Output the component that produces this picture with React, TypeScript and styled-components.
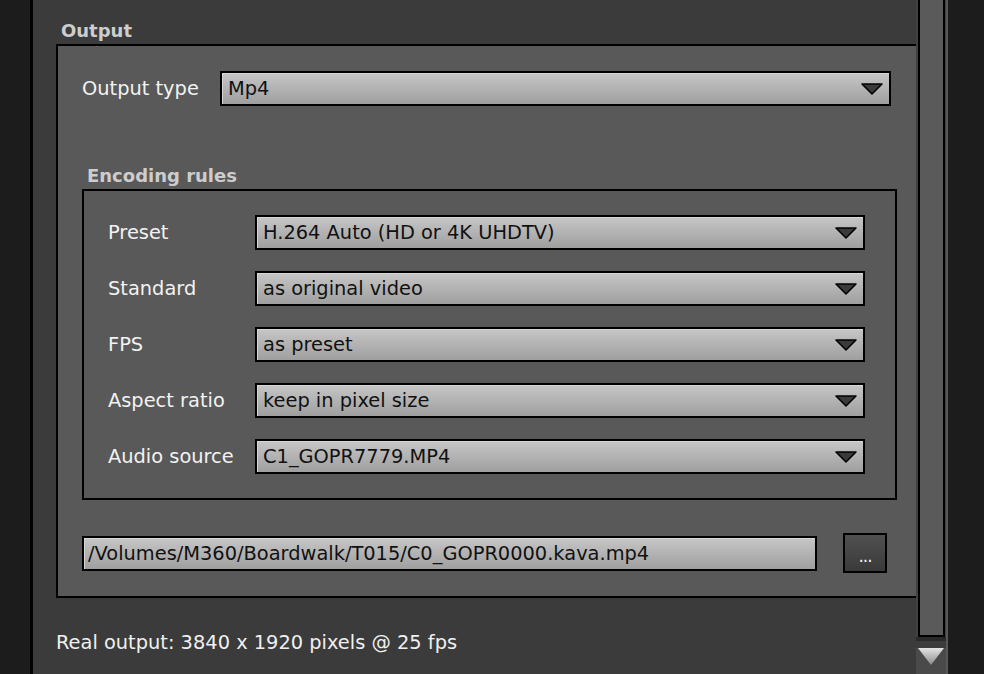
import styled, { createGlobalStyle } from "styled-components";

const GlobalStyle = createGlobalStyle`
  html, body {
    margin: 0;
    padding: 0;
    background: #1c1c1c;
    overflow: hidden;
  }
  body {
    font-family: "DejaVu Sans", "Liberation Sans", sans-serif;
  }
`;

const Window = styled.div`
  display: flex;
  height: 674px;
  width: 984px;
  background: #1c1c1c;
`;

const Gutter = styled.div<{ w: number }>`
  width: ${(p) => p.w}px;
  flex-shrink: 0;
  background: #1c1c1c;
`;

const Panel = styled.div`
  width: 886px;
  flex-shrink: 0;
  background: #3b3b3b;
  border-left: 3px solid #000;
  overflow: hidden;
  padding: 20px 0 0 23px;
  box-sizing: border-box;
`;

const GroupTitle = styled.div<{ indent?: number }>`
  font-weight: bold;
  font-size: 18px;
  line-height: 22px;
  color: #cdcdcd;
  padding-left: ${(p) => p.indent ?? 5}px;
  margin-bottom: 2px;
  white-space: nowrap;
`;

const GroupBox = styled.div<{ pad: string; width?: number }>`
  background: #595959;
  border: 2px solid #000;
  padding: ${(p) => p.pad};
  ${(p) => (p.width ? `width: ${p.width}px;` : "")}
  box-sizing: border-box;
  display: flex;
  flex-direction: column;
`;

const Row = styled.div<{ labelWidth: number }>`
  display: grid;
  grid-template-columns: ${(p) => p.labelWidth}px 1fr;
  align-items: center;
`;

const RowList = styled.div`
  display: flex;
  flex-direction: column;
  gap: 21px;
`;

const Label = styled.div`
  color: #f2f2f2;
  font-size: 19.4px;
  white-space: nowrap;
`;

const Field = styled.div<{ padLeft?: number }>`
  height: 35px;
  box-sizing: border-box;
  border: 2px solid #000;
  background: linear-gradient(#c6c6c6, #9f9f9f);
  box-shadow: inset 1px 1px 0 #d6d6d6;
  display: flex;
  align-items: center;
  padding: 0 6px 0 ${(p) => p.padLeft ?? 6}px;
  color: #111;
  font-size: 19.4px;
  white-space: nowrap;
  overflow: hidden;
`;

const SelectBox = styled(Field)<{ mr?: number }>`
  justify-content: space-between;
  margin-right: ${(p) => p.mr ?? 0}px;
`;

const Arrow = () => (
  <svg width="22" height="12" viewBox="0 0 22 12">
    <polygon points="1,1 21,1 11,11" fill="#3a3a3a" stroke="#000" strokeWidth="1.5" strokeLinejoin="round" />
  </svg>
);

const Select = ({ value, mr }: { value: string; mr?: number }) => (
  <SelectBox mr={mr}>
    <span>{value}</span>
    <Arrow />
  </SelectBox>
);

const Spacer = styled.div<{ h: number }>`
  height: ${(p) => p.h}px;
  flex-shrink: 0;
`;

const PathRow = styled.div`
  display: flex;
  align-items: center;
  gap: 26px;
  margin-right: 10px;
  height: 40px;
`;

const PathField = styled(Field)`
  flex: 1;
`;

const BrowseButton = styled.button`
  width: 44px;
  height: 40px;
  box-sizing: border-box;
  border: 2px solid #000;
  background: linear-gradient(#505050, #3a3a3a);
  color: #f2f2f2;
  font-family: "DejaVu Sans", sans-serif;
  font-size: 17px;
  padding: 6px 0 0;
  letter-spacing: -1px;
`;

const Status = styled.div`
  margin-top: 34px;
  color: #f0f0f0;
  font-size: 19.4px;
  line-height: 22px;
  white-space: nowrap;
`;

const ScrollColumn = styled.div`
  width: 32px;
  flex-shrink: 0;
  box-sizing: border-box;
  background: #424242;
  border-right: 2px solid #585858;
  padding-left: 2px;
  display: flex;
  flex-direction: column;
`;

const Thumb = styled.div`
  width: 27px;
  height: 637px;
  box-sizing: border-box;
  background: #5a5a5a;
  border: 2px solid #000;
  border-top: none;
`;

const ScrollGap = styled.div`
  height: 4px;
  margin-left: -2px;
  background: #2a2a2a;
`;

const ScrollArrowArea = styled.div`
  flex: 1;
  margin-left: -2px;
  background: linear-gradient(#3c3c3c 0, #3c3c3c 7px, #4a4a4a 7px);
  padding-top: 7px;
  display: flex;
  justify-content: center;
`;

const DownArrow = () => (
  <svg width="28" height="18" viewBox="0 0 28 18">
    <defs>
      <linearGradient id="sa" x1="0" y1="0" x2="0" y2="1">
        <stop offset="0" stopColor="#e4e4e4" />
        <stop offset="1" stopColor="#8a8a8a" />
      </linearGradient>
    </defs>
    <polygon points="1,0 27,0 14,17" fill="url(#sa)" />
  </svg>
);

const rules = [
  { label: "Preset", value: "H.264 Auto (HD or 4K UHDTV)" },
  { label: "Standard", value: "as original video" },
  { label: "FPS", value: "as preset" },
  { label: "Aspect ratio", value: "keep in pixel size" },
  { label: "Audio source", value: "C1_GOPR7779.MP4" },
];

export default function App() {
  return (
    <>
      <GlobalStyle />
      <Window>
        <Gutter w={30} />
        <Panel>
          <GroupTitle>Output</GroupTitle>
          <GroupBox pad="25px 22px 23px 24px" width={865}>
            <Row labelWidth={138}>
              <Label>Output type</Label>
              <Select value="Mp4" mr={6} />
            </Row>
            <Spacer h={59} />
            <GroupTitle indent={5}>Encoding rules</GroupTitle>
            <GroupBox pad="24px 30px 24px 24px">
              <RowList>
                {rules.map((r) => (
                  <Row key={r.label} labelWidth={147}>
                    <Label>{r.label}</Label>
                    <Select value={r.value} />
                  </Row>
                ))}
              </RowList>
            </GroupBox>
            <Spacer h={33} />
            <PathRow>
              <PathField padLeft={4}>/Volumes/M360/Boardwalk/T015/C0_GOPR0000.kava.mp4</PathField>
              <BrowseButton>...</BrowseButton>
            </PathRow>
          </GroupBox>
          <Status>Real output: 3840 x 1920 pixels @ 25 fps</Status>
        </Panel>
        <ScrollColumn>
          <Thumb />
          <ScrollGap />
          <ScrollArrowArea>
            <DownArrow />
          </ScrollArrowArea>
        </ScrollColumn>
        <Gutter w={36} />
      </Window>
    </>
  );
}
